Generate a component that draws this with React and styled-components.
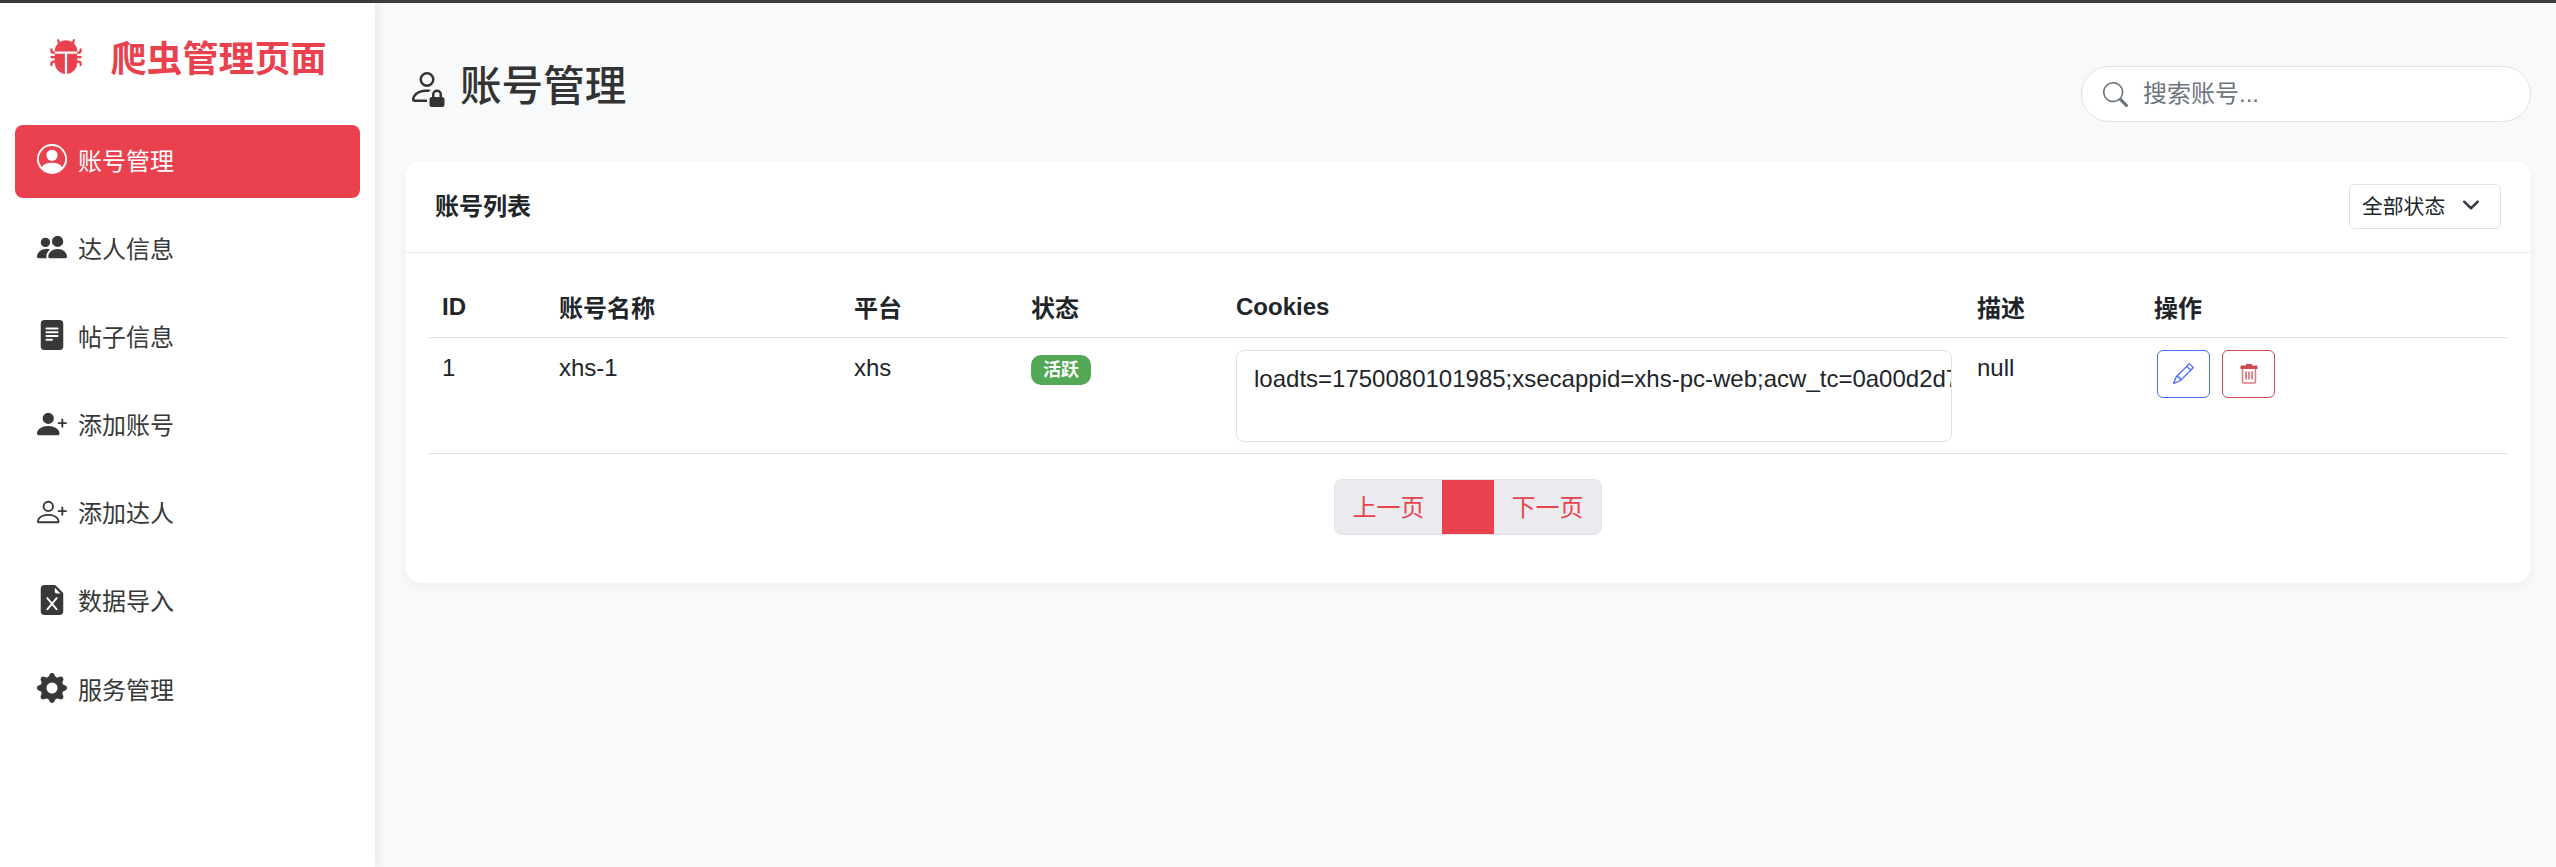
import styled, { createGlobalStyle } from 'styled-components'
import {
  BsBugFill,
  BsPersonCircle,
  BsPeopleFill,
  BsFileTextFill,
  BsPersonPlusFill,
  BsPersonPlus,
  BsFileEarmarkExcelFill,
  BsGearFill,
  BsPersonLock,
  BsSearch,
  BsPencil,
  BsChevronDown,
} from 'react-icons/bs'

const RED = '#e9424e'
const FONT = '"Liberation Sans", "Noto Sans CJK SC", sans-serif'

const GlobalStyle = createGlobalStyle`
  html, body {
    margin: 0;
    padding: 0;
    height: 100%;
  }
  body {
    background: #f8f9fa;
    font-family: ${FONT};
    color: #212529;
  }
  * {
    box-sizing: border-box;
  }
`

const Page = styled.div`
  display: flex;
  height: 867px;
  overflow: hidden;
  border-top: 3px solid #3c3c3c;
`

const Sidebar = styled.aside`
  width: 375px;
  flex-shrink: 0;
  padding: 0 15px;
  background: #fff;
  box-shadow: 3px 0 10px rgba(0, 0, 0, 0.08);
`

const Brand = styled.div`
  height: 122px;
  display: flex;
  align-items: center;
  justify-content: center;
  gap: 26px;
  padding-bottom: 16px;
  color: ${RED};
  font-size: 36px;
  font-weight: 700;

  svg {
    font-size: 36px;
  }
`

const NavList = styled.nav`
  display: flex;
  flex-direction: column;
  gap: 15.2px;
`

const NavItem = styled.a`
  height: 73px;
  display: flex;
  align-items: center;
  gap: 11px;
  padding: 0 22px 5px;
  border-radius: 8px;
  font-size: 24px;
  color: ${(p) => (p.$active ? '#fff' : '#383838')};
  background: ${(p) => (p.$active ? RED : 'transparent')};

  svg {
    font-size: 30px;
    flex-shrink: 0;
  }
`

const Main = styled.main`
  flex: 1;
  min-width: 0;
  padding: 0 25px 0 30px;
`

const TopRow = styled.header`
  height: 158px;
  display: flex;
  align-items: flex-start;
  justify-content: space-between;
  padding-top: 56px;
`

const PageTitle = styled.h1`
  margin: 0;
  display: flex;
  align-items: center;
  gap: 13px;
  font-size: 41.6px;
  line-height: 56px;
  font-weight: 500;
  color: #333;
  padding-left: 2px;

  svg {
    font-size: 40px;
  }
`

const SearchBox = styled.div`
  width: 450px;
  height: 56px;
  margin-top: 7px;
  display: flex;
  align-items: center;
  gap: 15px;
  padding: 0 21px;
  background: #fff;
  border: 1px solid #dee2e6;
  border-radius: 28px;
  color: #6c757d;

  svg {
    font-size: 25px;
    flex-shrink: 0;
  }
`

const SearchInput = styled.input`
  flex: 1;
  min-width: 0;
  border: 0;
  outline: 0;
  padding: 0;
  font-family: ${FONT};
  font-size: 24px;

  &::placeholder {
    color: #6c757d;
    opacity: 1;
  }
`

const Card = styled.section`
  height: 422px;
  background: #fff;
  border-radius: 16px;
  box-shadow: 0 4px 12px rgba(0, 0, 0, 0.05);
`

const CardHeader = styled.div`
  height: 92px;
  display: flex;
  align-items: center;
  justify-content: space-between;
  padding: 0 30px;
  border-bottom: 1px solid #e9ecef;
`

const CardTitle = styled.h2`
  margin: 0 0 5px;
  font-size: 24px;
  font-weight: 700;
  color: #212529;
`

const StatusSelect = styled.div`
  width: 152px;
  height: 45px;
  display: flex;
  align-items: center;
  justify-content: space-between;
  padding: 0 20px 4px 12px;
  background: #fff;
  border: 1px solid #dee2e6;
  border-radius: 5px;
  font-size: 20.8px;
  color: #212529;

  svg {
    font-size: 18px;
    stroke-width: 1.2;
    color: #343a40;
  }
`

const CardBody = styled.div`
  padding: 0 24px;
`

const Table = styled.table`
  width: 100%;
  table-layout: fixed;
  border-collapse: collapse;
`

const Th = styled.th`
  height: 84px;
  padding: 24px 13px 0;
  text-align: left;
  font-size: 24px;
  font-weight: 700;
  color: #212529;
  border-bottom: 1px solid #dfe1e4;
`

const Td = styled.td`
  height: 115px;
  padding: 12px 13px 11px;
  vertical-align: top;
  font-size: 24px;
  line-height: 36px;
  color: #212529;
  border-bottom: 1px solid #dfe1e4;
`

const Badge = styled.span`
  display: inline-flex;
  align-items: center;
  justify-content: center;
  width: 60px;
  height: 30px;
  border-radius: 10px;
  background: #52a855;
  color: #fff;
  font-size: 18px;
  font-weight: 700;
  line-height: 1;
`

const CookieBox = styled.div`
  width: 716px;
  height: 92px;
  padding: 10px 0 10px 17px;
  overflow: hidden;
  white-space: nowrap;
  border: 1px solid #dee2e6;
  border-radius: 8px;
  background: #fff;
`

const ActionRow = styled.div`
  display: flex;
  gap: 12px;
  padding-left: 3px;
`

const IconButton = styled.button`
  width: 53px;
  height: 48px;
  display: flex;
  align-items: center;
  justify-content: center;
  padding: 0;
  border: 1px solid ${(p) => p.$color};
  border-radius: 6px;
  background: #fff;
  color: ${(p) => p.$color};
  font-size: 21px;
`

const Pager = styled.div`
  display: flex;
  justify-content: center;
  padding-top: 25px;
`

const PagerGroup = styled.div`
  display: flex;
  height: 56px;
  overflow: hidden;
  background: #eaebef;
  border: 1px solid #dee2e6;
  border-radius: 8px;
`

const PagerButton = styled.button`
  padding: 0 17.5px 3px;
  border: 0;
  background: #eaebef;
  color: ${RED};
  font-family: ${FONT};
  font-size: 24px;
`

const PagerCurrent = styled.span`
  width: 52px;
  margin: -1px 0;
  background: ${RED};
`

const navItems = [
  { label: '账号管理', icon: BsPersonCircle, active: true },
  { label: '达人信息', icon: BsPeopleFill },
  { label: '帖子信息', icon: BsFileTextFill },
  { label: '添加账号', icon: BsPersonPlusFill },
  { label: '添加达人', icon: BsPersonPlus },
  { label: '数据导入', icon: BsFileEarmarkExcelFill },
  { label: '服务管理', icon: BsGearFill },
]

const columns = [
  { label: 'ID', width: 117 },
  { label: '账号名称', width: 295 },
  { label: '平台', width: 177 },
  { label: '状态', width: 205 },
  { label: 'Cookies', width: 741 },
  { label: '描述', width: 177 },
  { label: '操作', width: 366 },
]

// solid lid with a pale outlined body, the icon packs don't have this one
function TrashIcon() {
  return (
    <svg width="18" height="20" viewBox="0 0 18 20">
      <rect x="6" y="0" width="6" height="2" fill="currentColor" />
      <rect x="0.5" y="1.5" width="17" height="3.5" rx="0.5" fill="currentColor" />
      <path d="M2.5 5v13a1 1 0 0 0 1 1h11a1 1 0 0 0 1-1V5" fill="none" stroke="#dc7a82" strokeWidth="1.5" />
      <path d="M6 7.5v8M9 7.5v8M12 7.5v8" fill="none" stroke="currentColor" strokeWidth="1.3" />
    </svg>
  )
}

export default function App() {
  return (
    <>
      <GlobalStyle />
      <Page>
        <Sidebar>
          <Brand>
            <BsBugFill />
            爬虫管理页面
          </Brand>
          <NavList>
            {navItems.map(({ label, icon: Icon, active }) => (
              <NavItem key={label} $active={active}>
                <Icon />
                {label}
              </NavItem>
            ))}
          </NavList>
        </Sidebar>
        <Main>
          <TopRow>
            <PageTitle>
              <BsPersonLock />
              账号管理
            </PageTitle>
            <SearchBox>
              <BsSearch />
              <SearchInput placeholder="搜索账号..." />
            </SearchBox>
          </TopRow>
          <Card>
            <CardHeader>
              <CardTitle>账号列表</CardTitle>
              <StatusSelect>
                全部状态
                <BsChevronDown />
              </StatusSelect>
            </CardHeader>
            <CardBody>
              <Table>
                <colgroup>
                  {columns.map((c) => (
                    <col key={c.label} width={c.width} />
                  ))}
                </colgroup>
                <thead>
                  <tr>
                    {columns.map((c) => (
                      <Th key={c.label}>{c.label}</Th>
                    ))}
                  </tr>
                </thead>
                <tbody>
                  <tr>
                    <Td>1</Td>
                    <Td>xhs-1</Td>
                    <Td>xhs</Td>
                    <Td>
                      <Badge>活跃</Badge>
                    </Td>
                    <Td>
                      <CookieBox>loadts=1750080101985;xsecappid=xhs-pc-web;acw_tc=0a00d2d7</CookieBox>
                    </Td>
                    <Td>null</Td>
                    <Td>
                      <ActionRow>
                        <IconButton $color="#4a6cf7">
                          <BsPencil />
                        </IconButton>
                        <IconButton $color="#cc4a52">
                          <TrashIcon />
                        </IconButton>
                      </ActionRow>
                    </Td>
                  </tr>
                </tbody>
              </Table>
              <Pager>
                <PagerGroup>
                  <PagerButton>上一页</PagerButton>
                  <PagerCurrent />
                  <PagerButton>下一页</PagerButton>
                </PagerGroup>
              </Pager>
            </CardBody>
          </Card>
        </Main>
      </Page>
    </>
  )
}
